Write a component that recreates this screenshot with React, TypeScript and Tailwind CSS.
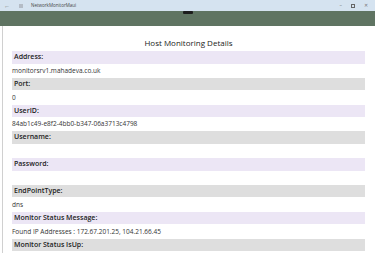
const fields = [
  { label: "Address:", value: "monitorsrv1.mahadeva.co.uk" },
  { label: "Port:", value: "0" },
  { label: "UserID:", value: "84ab1c49-e8f2-4bb0-b347-06a3713c4798" },
  { label: "Username:", value: "" },
  { label: "Password:", value: "" },
  { label: "EndPointType:", value: "dns" },
  { label: "Monitor Status Message:", value: "Found IP Addresses : 172.67.201.25, 104.21.66.45" },
  { label: "Monitor Status IsUp:", value: "" },
];

export default function App() {
  return (
    <div className="w-[375px] h-[253px] overflow-hidden bg-white flex flex-col font-['Open_Sans',sans-serif]">
      {/* window title bar */}
      <div className="h-[11px] bg-[#d5e3f0] flex items-center text-[#777] shrink-0">
        <span className="ml-[4px] w-[6px] text-[6px] leading-none">←</span>
        <span className="ml-[9px] w-[4px] h-[4px] bg-[#b4bcc6]"></span>
        <span className="ml-[8px] text-[4.5px] leading-none text-[#444]">NetworkMonitorMaui</span>
        <div className="ml-auto flex items-center gap-[9px] mr-[7px] text-[5px] leading-none">
          <span>–</span>
          <span className="w-[4px] h-[4px] border border-[#666]"></span>
          <span>✕</span>
        </div>
      </div>
      {/* green toolbar band */}
      <div className="h-[15px] bg-[#5f7462] flex justify-center shrink-0">
        <div className="w-[10px] h-[3px] bg-[#1c1c1c] rounded-[1px] ml-[1px]"></div>
      </div>
      <div className="flex-1 border-l border-[#d0d0d0] ml-[2px] pl-[9px] pr-[10px]">
        <div className="h-[25px] pt-[11px] text-center text-[8px] leading-[12px] text-[#222]">
          Host Monitoring Details
        </div>
        {fields.map((f, i) => (
          <div key={f.label}>
            <div
              className={
                i % 2 === 0
                  ? "h-[12.5px] bg-[#ece6f5] pl-[2px] flex items-center text-[7px] font-semibold text-[#222]"
                  : "h-[12.5px] bg-[#dedede] pl-[2px] flex items-center text-[7px] font-semibold text-[#222]"
              }
            >
              {f.label}
            </div>
            <div className="h-[14.3px] flex items-center text-[6.5px] text-[#333]">{f.value}</div>
          </div>
        ))}
      </div>
    </div>
  );
}
